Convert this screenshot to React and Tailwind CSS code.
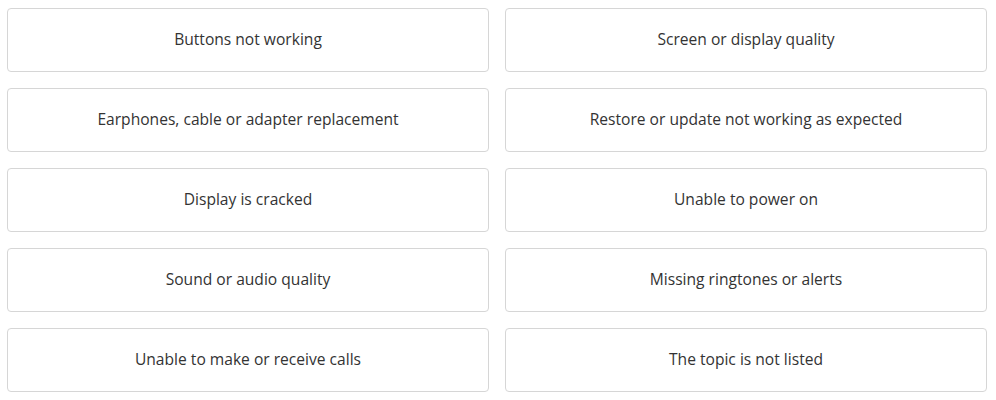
import React from 'react';

const topics = [
  'Buttons not working',
  'Screen or display quality',
  'Earphones, cable or adapter replacement',
  'Restore or update not working as expected',
  'Display is cracked',
  'Unable to power on',
  'Sound or audio quality',
  'Missing ringtones or alerts',
  'Unable to make or receive calls',
  'The topic is not listed',
];

const App = () => {
  return (
    <div className="bg-white min-h-screen pl-[7px] pt-[8px]" style={{ fontFamily: '"Open Sans", "Liberation Sans", sans-serif' }}>
      <div className="grid grid-cols-2 gap-4 w-[980px]">
        {topics.map((t) => (
          <button
            key={t}
            className="h-16 pb-[1px] rounded-[4px] border border-[#d6d6d6] bg-white text-[15.6px] text-[#333333] flex items-center justify-center"
          >
            {t}
          </button>
        ))}
      </div>
    </div>
  );
};

export default App;
